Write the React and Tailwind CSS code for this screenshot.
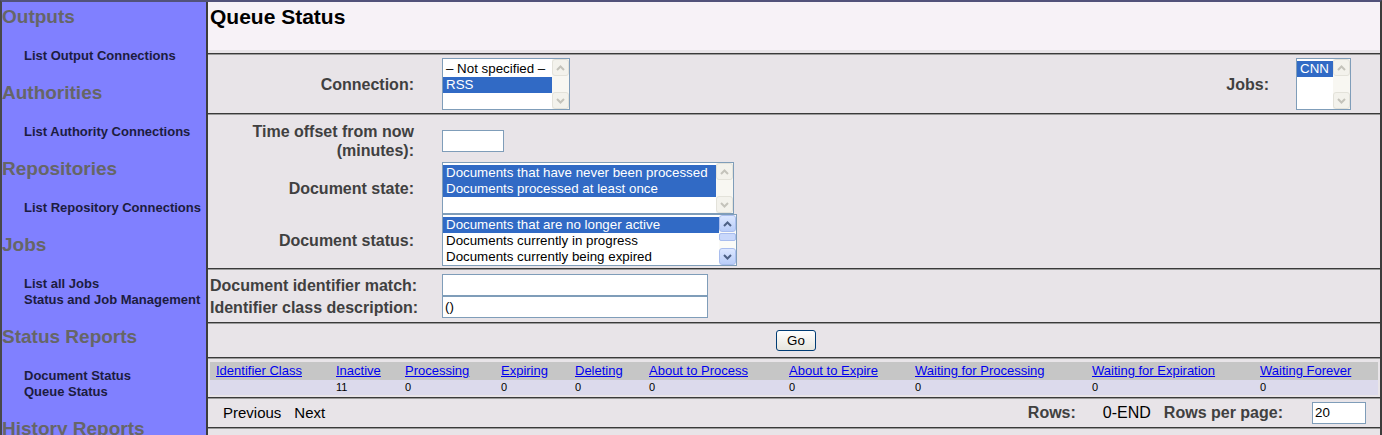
import React from 'react';

const sections = [
  ['Outputs', ['List Output Connections']],
  ['Authorities', ['List Authority Connections']],
  ['Repositories', ['List Repository Connections']],
  ['Jobs', ['List all Jobs', 'Status and Job Management']],
  ['Status Reports', ['Document Status', 'Queue Status']],
  ['History Reports', ['Simple History', 'Maximum Activity']],
];

const columns = [
  ['Identifier Class', ''],
  ['Inactive', '11'],
  ['Processing', '0'],
  ['Expiring', '0'],
  ['Deleting', '0'],
  ['About to Process', '0'],
  ['About to Expire', '0'],
  ['Waiting for Processing', '0'],
  ['Waiting for Expiration', '0'],
  ['Waiting Forever', '0'],
];

function Chevron({ up, color }) {
  return (
    <svg width="9" height="6" viewBox="0 0 9 6">
      <polyline
        points={up ? '1,5 4.5,1.5 8,5' : '1,1 4.5,4.5 8,1'}
        fill="none"
        stroke={color}
        strokeWidth="2"
      />
    </svg>
  );
}

function ScrollBar({ active }) {
  const btn = active
    ? 'bg-gradient-to-b from-[#dce7ff] to-[#b9cdf8] border-[#a9bdee]'
    : 'bg-[#f3f2ec] border-[#e3e2da]';
  const arrow = active ? '#4d6185' : '#c4c3bb';
  return (
    <div className={`flex h-full w-[17px] flex-col ${active ? 'bg-[#fbfbf8]' : 'bg-[#f8f7f2]'}`}>
      <div className={`flex h-[17px] w-[17px] items-center justify-center rounded-[3px] border ${btn}`}>
        <Chevron up color={arrow} />
      </div>
      {active && (
        <div className="mt-[1px] h-[8px] w-[17px] rounded-[2px] border border-[#a9bdee] bg-[#c9d8fb]" />
      )}
      <div className="flex-1" />
      <div className={`flex h-[17px] w-[17px] items-center justify-center rounded-[3px] border ${btn}`}>
        <Chevron color={arrow} />
      </div>
    </div>
  );
}

function ListBox({ className, options, active }) {
  return (
    <div className={`flex h-[52px] border border-[#7f9db9] bg-white ${className}`}>
      <div className="flex-1 overflow-hidden pt-[2px]">
        {options.map(([text, selected]) => (
          <div
            key={text}
            className={`h-[16px] whitespace-nowrap px-[3px] text-[13.33px] leading-[16px] ${
              selected ? 'bg-[#316ac5] text-white' : 'text-black'
            }`}
          >
            {text}
          </div>
        ))}
      </div>
      <ScrollBar active={active} />
    </div>
  );
}

function Rule() {
  return <div className="h-[2px] border-t border-b border-t-[#3a3a3a] border-b-[#9a9a9a]" />;
}

function Label({ children }) {
  return (
    <div className="w-[206px] text-right text-[16px] font-bold leading-[19px] text-[#404040]">
      {children}
    </div>
  );
}

export default function App() {
  return (
    <div className="h-[435px] w-[1382px] overflow-hidden border-t-2 border-r-2 border-l-2 border-t-[#52527a] border-r-[#3c3c3c] border-l-[#484848] font-['Liberation_Sans',Arial,sans-serif]">
      <div className="flex h-full">
        {/* Navigation */}
        <div className="w-[206px] shrink-0 border-r-2 border-[#3c3c3c] bg-[#8080ff] pt-[4px]">
          {sections.map(([title, items]) => (
            <div key={title}>
              <div className="whitespace-nowrap text-[19px] font-bold leading-[22px] text-[#666666]">
                {title}
              </div>
              <div className="pt-[20px] pb-[18px] pl-[22px]">
                {items.map((item) => (
                  <div
                    key={item}
                    className="whitespace-nowrap text-[13px] font-bold leading-[16px] text-[#1c1c40]"
                  >
                    {item}
                  </div>
                ))}
              </div>
            </div>
          ))}
        </div>

        {/* Main */}
        <div className="flex-1 bg-[#e8e4e8]">
          <div className="h-[48px] bg-[#f7f2f7] pt-[3px] pl-[2px]">
            <h1 className="text-[21px] font-bold leading-[24px] text-black">Queue Status</h1>
          </div>
          <div className="pt-[3px]">
            <Rule />
            {/* Connection / Jobs */}
            <div className="flex h-[58px] items-center pr-[29px]">
              <Label>Connection:</Label>
              <ListBox
                className="ml-[28px] w-[128px]"
                options={[['– Not specified –', false], ['RSS', true]]}
              />
              <div className="flex-1" />
              <Label>Jobs:</Label>
              <ListBox className="ml-[27px] w-[55px]" options={[['CNN', true]]} />
            </div>
            <Rule />
            {/* Time, state, status */}
            <div className="pt-[6px] pb-[2px]">
              <div className="flex h-[39px] items-center">
                <Label>
                  Time offset from now
                  <br />
                  (minutes):
                </Label>
                <div className="ml-[28px] h-[22px] w-[62px] border border-[#7f9db9] bg-white" />
              </div>
              <div className="mt-[2px] flex items-center">
                <Label>Document state:</Label>
                <ListBox
                  className="ml-[28px] w-[292px]"
                  options={[
                    ['Documents that have never been processed', true],
                    ['Documents processed at least once', true],
                  ]}
                />
              </div>
              <div className="flex items-center">
                <Label>Document status:</Label>
                <ListBox
                  className="ml-[28px] w-[295px]"
                  active
                  options={[
                    ['Documents that are no longer active', true],
                    ['Documents currently in progress', false],
                    ['Documents currently being expired', false],
                  ]}
                />
              </div>
            </div>
            <Rule />
            {/* Identifier */}
            <div className="pt-[4px] pb-[4px]">
              <div className="flex items-center">
                <div className="w-[234px] whitespace-nowrap pl-[2px] text-[16px] font-bold leading-[19px] text-[#404040]">
                  Document identifier match:
                </div>
                <div className="h-[22px] w-[266px] border border-[#7f9db9] bg-white" />
              </div>
              <div className="flex items-center">
                <div className="w-[234px] whitespace-nowrap pl-[2px] text-[16px] font-bold leading-[19px] text-[#404040]">
                  Identifier class description:
                </div>
                <div className="h-[22px] w-[266px] border border-[#7f9db9] bg-white pl-[2px] text-[13.33px] leading-[20px] text-black">
                  ()
                </div>
              </div>
            </div>
            <Rule />
            {/* Go */}
            <div className="flex justify-center py-[6px]">
              <button className="ml-[4px] h-[21px] w-[40px] rounded-[3px] border border-[#003c74] bg-gradient-to-b from-white to-[#e6e5de] text-[13.33px] leading-[19px] text-black">
                Go
              </button>
            </div>
            <Rule />
            {/* Results */}
            <div className="px-[2px] pt-[3px] pb-[2px]">
              <div className="grid h-[18px] grid-cols-[120px_69px_96px_74px_74px_140px_126px_177px_168px_1fr] items-center bg-[#c6c6c6] pl-[6px]">
                {columns.map(([name]) => (
                  <a
                    key={name}
                    href="#"
                    className="whitespace-nowrap text-[13px] leading-[16px] text-[#0000ee] underline"
                  >
                    {name}
                  </a>
                ))}
              </div>
              <div className="grid h-[15px] grid-cols-[120px_69px_96px_74px_74px_140px_126px_177px_168px_1fr] items-center bg-[#dcdaec] pl-[6px]">
                {columns.map(([name, value]) => (
                  <div key={name} className="text-[11px] leading-[13px] text-black">
                    {value}
                  </div>
                ))}
              </div>
            </div>
            <Rule />
            {/* Pagination */}
            <div className="flex h-[28px] items-center pl-[15px] pr-[14px]">
              <span className="text-[15px] text-black">Previous</span>
              <span className="ml-[13px] text-[15px] text-black">Next</span>
              <div className="flex-1" />
              <span className="text-[16px] font-bold text-[#404040]">Rows:</span>
              <span className="ml-[27px] text-[16px] text-black">0-END</span>
              <span className="ml-[13px] text-[16px] font-bold text-[#404040]">Rows per page:</span>
              <div className="ml-[29px] h-[22px] w-[54px] border border-[#7f9db9] bg-white pl-[2px] text-[13.33px] leading-[20px] text-black">
                20
              </div>
            </div>
            <Rule />
          </div>
        </div>
      </div>
    </div>
  );
}
